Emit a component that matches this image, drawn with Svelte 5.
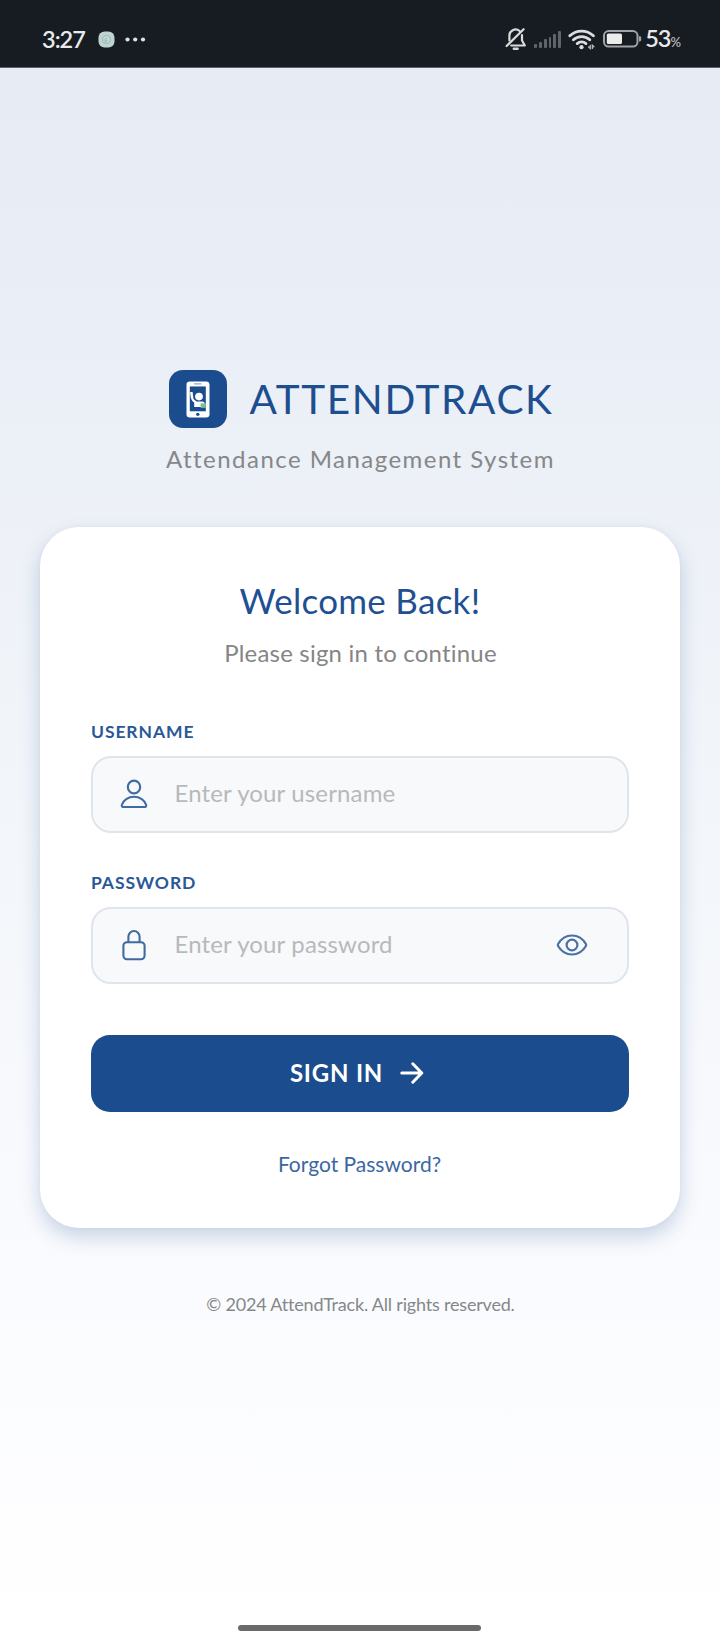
<script>
  let username = $state('');
  let password = $state('');
  let visible = $state(false);
  const bars = [4, 6, 9, 11, 14, 17];
</script>

<div class="screen">
  <header class="status">
    <div class="left">
      <span class="time">3:27</span>
      <svg class="app-dot" width="17" height="17" viewBox="0 0 17 17">
        <rect x=".5" y=".5" width="16" height="16" rx="6" fill="#bfd3d3" />
        <circle cx="8.5" cy="8.5" r="4.6" fill="#a6c0bf" />
        <path d="M6 10.5V8.4a2.5 2.5 0 1 1 2.6 2.4M8.5 8.4h2.6" fill="none" stroke="#cbdcdb" stroke-width="1.2" />
      </svg>
      <svg class="more" width="21" height="5" viewBox="0 0 21 5" fill="#dfe1e3">
        <circle cx="2.5" cy="2.5" r="2.1" /><circle cx="10.2" cy="2.5" r="2.1" /><circle cx="18" cy="2.5" r="2.1" />
      </svg>
    </div>
    <div class="right">
      <svg class="bell" width="22" height="24" viewBox="0 0 22 24" fill="none" stroke="#d9dadc" stroke-width="2.2" stroke-linecap="round" stroke-linejoin="round">
        <path d="M4.4 13.5V9.2A6.2 6.2 0 0 1 14.6 4" />
        <path d="M17 8.2v5.3l2.8 5H6.200" />
        <path d="M1.600 19 18.600 2.200" />
        <path d="M8.800 21.800h3.800" stroke-width="2.400" />
      </svg>
      <div class="bars">
        {#each bars as h}<i style:height="{h}px"></i>{/each}
      </div>
      <svg class="wifi" width="28" height="21" viewBox="0 0 28 21" fill="none" stroke="#dcdddf" stroke-width="2.800" stroke-linecap="round">
        <path d="M1.800 6.800a17 17 0 0 1 23.600 0" />
        <path d="M5.400 10.800a12 12 0 0 1 16.400 0" />
        <path d="M9.200 14.600a6.800 6.800 0 0 1 8.800 0" />
        <circle cx="13.500" cy="18.200" r="2.100" fill="#dcdddf" stroke="none" />
        <path d="M22.200 16.400v3l-1.600-1.400M24.400 19.400v-3l1.500 1.400" stroke-width="1.400" stroke="#b5b7ba" />
      </svg>
      <svg class="battery" width="39" height="18" viewBox="0 0 39 18">
        <rect x="1" y="1" width="33.500" height="15.600" rx="4.600" fill="none" stroke="#a0a3a6" stroke-width="2" />
        <rect x="3.800" y="3.600" width="15.200" height="10.400" rx="1.600" fill="#ececec" />
        <path d="M36 6.200h.8a1.400 1.400 0 0 1 1.400 1.400v2.400a1.400 1.400 0 0 1-1.400 1.400H36z" fill="#a0a3a6" />
      </svg>
      <span class="pct">53<small>%</small></span>
    </div>
  </header>

  <main>
    <div class="brand">
      <div class="tile">
        <svg width="24" height="37" viewBox="0 0 24 38" preserveAspectRatio="none">
          <rect x=".5" y=".5" width="23" height="37" rx="3.400" fill="#fff" />
          <rect x="8" y="2.200" width="7.500" height="1.300" rx=".6" fill="#8ea5c6" />
          <rect x="3.800" y="5.600" width="16" height="25.500" fill="#1b4d8e" />
          <circle cx="13" cy="16" r="3.900" fill="#fff" />
          <path d="M4.200 11.400h2.400l.9 7.200 3 2.400h5.600c2.200 0 2.800 1.400 2.800 3.200v2.600H8.200v-4.600C5.400 20.400 4.400 17.500 4.200 11.400z" fill="#fff" />
          <path d="M14.600 23h5.200v4.600h-5.200z" fill="#79c09b" />
          <circle cx="11.800" cy="34.200" r="1.700" fill="#1b4d8e" />
        </svg>
      </div>
      <h1>ATTENDTRACK</h1>
    </div>
    <p class="tagline">Attendance Management System</p>

    <form class="card" onsubmit={(e) => e.preventDefault()}>
      <h2>Welcome Back!</h2>
      <p class="lead">Please sign in to continue</p>

      <label for="user" class="first">USERNAME</label>
      <div class="field">
        <svg class="lead-icon" width="32" height="32" viewBox="0 0 32 32" fill="none" stroke="#3f6aa2" stroke-width="2.100" stroke-linejoin="round">
          <ellipse cx="16" cy="9" rx="6.200" ry="6.400" />
          <path d="M16 18.800c5.600 0 11 3.200 12.200 8.200.2 1-.2 2-1.200 2H5c-1 0-1.400-1-1.200-2C5 22 10.400 18.800 16 18.800z" />
        </svg>
        <input id="user" type="text" placeholder="Enter your username" bind:value={username} />
      </div>

      <label for="pass" class="second">PASSWORD</label>
      <div class="field">
        <svg class="lead-icon" width="32" height="32" viewBox="0 0 32 32" fill="none" stroke="#3f6aa2" stroke-width="2.100" stroke-linejoin="round">
          <path d="M10.400 13.200V7.600a5.600 5.600 0 0 1 11.200 0v5.600" />
          <rect x="5.400" y="13.200" width="21.200" height="17" rx="3.600" />
        </svg>
        <input id="pass" type={visible ? 'text' : 'password'} placeholder="Enter your password" bind:value={password} />
        <button type="button" class="eye" aria-label="Show password" onclick={() => (visible = !visible)}>
          <svg width="32" height="24" viewBox="0 0 32 24" fill="none" stroke="#4a70a4" stroke-width="2.200" stroke-linejoin="round">
            <path d="M16 2.500C10 2.500 5 6 2.100 11a2 2 0 0 0 0 2C5 18 10 21.500 16 21.500s11-3.500 13.900-8.500a2 2 0 0 0 0-2C27 6 22 2.500 16 2.500z" />
            <circle cx="16" cy="12" r="5.400" />
          </svg>
        </button>
      </div>

      <button type="submit" class="submit">
        <span>SIGN IN</span>
        <svg width="24" height="22" viewBox="0 0 24 22" fill="none" stroke="#fff" stroke-width="3" stroke-linecap="round" stroke-linejoin="round">
          <path d="M1.800 11h19.600M12.800 1.800l9 9.200-9 9.200" />
        </svg>
      </button>
      <a class="forgot" href="#forgot">Forgot Password?</a>
    </form>

    <p class="copy">© 2024 AttendTrack. All rights reserved.</p>
  </main>
  <div class="home"></div>
</div>

<style>
  :global(body) { margin: 0; }
  .screen {
    width: 720px; height: 1640px; display: flex; flex-direction: column;
    font-family: Lato, sans-serif; font-variant-ligatures: none; overflow: hidden;
    background: linear-gradient(180deg, #e6eaf4 0, #eaeef6 20%, #f3f6fa 52%, #fafbfe 78%, #ffffff 100%);
  }
  h1, h2, p { margin: 0; font-weight: 400; }
  .status {
    box-sizing: border-box; height: 68px; flex: none; background: #171b22;
    border-bottom: 1px solid #5c6068; padding: 11px 39px 0 42px;
    display: flex; justify-content: space-between; align-items: center; color: #e8e9ea;
  }
  .left, .right { display: flex; align-items: center; }
  .time { font: 600 23.500px/28px Lato, sans-serif; letter-spacing: -1px; width: 56px; }
  .more { margin-left: 10px; }
  .bars { display: flex; align-items: flex-end; gap: 2px; height: 18px; margin-left: 7px; }
  .bars i { width: 2.900px; background: #5f636a; border-radius: 1px; }
  .wifi { margin-left: 7px; }
  .battery { margin-left: 7px; }
  .pct { font: 600 23.500px/28px Lato, sans-serif; letter-spacing: -1px; margin-left: 3px; padding-top: 2px; display: flex; align-items: baseline; }
  .pct small { font-size: 13px; letter-spacing: 0; color: #b5b7ba; }

  main { display: flex; flex-direction: column; align-items: center; padding-top: 302px; }
  .brand { display: flex; align-items: center; gap: 22.500px; height: 58px; align-self: flex-start; margin-left: 168.500px; }
  .tile { width: 58.500px; height: 58.500px; border-radius: 14px; background: #1b4d8e; display: flex; align-items: center; justify-content: center; }
  h1 { font-size: 40.500px; line-height: 50px; letter-spacing: 1.640px; color: #1d4e8f; white-space: nowrap; }
  .tagline { margin-top: 15.500px; font-size: 24px; line-height: 30px; letter-spacing: 1.460px; color: #858789; padding-left: 1px; white-space: nowrap; }

  .card {
    box-sizing: border-box; width: 640px; height: 701px; margin-top: 53.500px; padding: 51px;
    border-radius: 39px; background: #fff; display: flex; flex-direction: column;
    box-shadow: 0 9px 20px rgba(27, 77, 142, .22), 0 0 4px rgba(27, 77, 142, .04);
  }
  h2 { text-align: center; font-size: 35px; line-height: 44px; letter-spacing: .280px; color: #1f5092; }
  .lead { text-align: center; margin-top: 16px; font-size: 24px; line-height: 30px; letter-spacing: .200px; color: #858585; padding-left: 1px; }
  label { font-size: 17.500px; line-height: 22px; font-weight: 700; letter-spacing: .900px; color: #2b5897; }
  .first { margin-top: 52.500px; }
  .second { margin-top: 39px; }
  .field {
    box-sizing: border-box; height: 77px; margin-top: 13px; border: 2px solid #e0e5eb; border-radius: 20px;
    background: #f7f9fb; display: flex; align-items: center; padding: 0 39px 0 25px;
  }
  .lead-icon { flex: none; margin-top: -1px; }
  input {
    flex: 1; min-width: 0; margin-left: 24.500px; padding: 0 0 3px; border: 0; outline: 0; background: none;
    font: 400 24px/30px Lato, sans-serif; letter-spacing: .150px; color: #333;
  }
  input::placeholder { color: #b7b9bb; opacity: 1; }
  .eye { border: 0; background: none; padding: 0; height: 24px; flex: none; }
  .eye svg { display: block; }
  .submit {
    flex: none; height: 77px; margin-top: 51px; border: 0; border-radius: 19px; background: #1b4d8e; color: #fff;
    display: flex; align-items: center; justify-content: center; gap: 17px; padding: 0 0 0 4px;
    font: 700 24px/30px Lato, sans-serif; letter-spacing: .800px;
  }
  .submit span { padding-bottom: 0; }
  .submit svg { margin-right: 10px; }
  .forgot { align-self: center; margin: 39.500px 1px 0 0; font-size: 21px; line-height: 26px; color: #3d689f; text-decoration: none; }
  .copy { margin-top: 65px; font-size: 18px; line-height: 22px; letter-spacing: -.190px; color: #858789; white-space: nowrap; padding-left: 1px; }
  .home { width: 243px; height: 6px; border-radius: 3px; background: #6a6a6a; margin: auto 0 9.500px 238px; }
</style>
